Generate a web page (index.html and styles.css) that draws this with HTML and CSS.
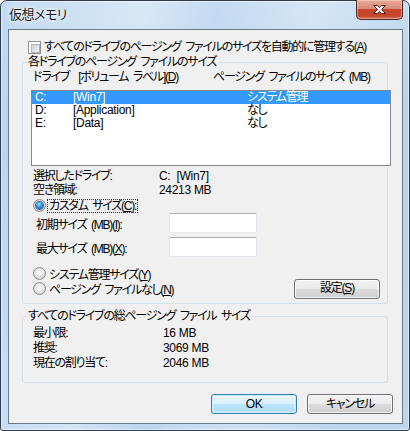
FILE: index.html
```html
<!DOCTYPE html>
<html lang="ja">
<head>
<meta charset="utf-8">
<title>仮想メモリ</title>
<link rel="stylesheet" href="styles.css">
</head>
<body>
<div class="window">
  <div class="titlebar">
    <span class="title">仮想メモリ</span>
    <span class="close">
      <svg width="17" height="11" viewBox="0 0 17 11"><path d="M2.5 1.5h4l2 2.2 2-2.2h4l-4 4 4 4h-4l-2-2.2-2 2.2h-4l4-4z" fill="#fff" stroke="#4a1c14" stroke-width="1" stroke-linejoin="round"/></svg>
    </span>
  </div>
  <div class="client">
    <div class="autorow">
      <span class="check"></span>
      <span class="label">すべてのドライブのページング ファイルのサイズを自動的に管理する(<u>A</u>)</span>
    </div>

    <fieldset class="group group-drive">
      <legend>各ドライブのページング ファイルのサイズ</legend>
      <div class="listhead">
        <span class="hcol1">ドライブ&nbsp;&nbsp;[ボリューム ラベル](<u>D</u>)</span>
        <span>ページング ファイルのサイズ (MB)</span>
      </div>
      <div class="listbox">
        <div class="lrow sel"><span class="c1 lat">C:</span><span class="c2 lat">[Win7]</span><span>システム管理</span></div>
        <div class="lrow"><span class="c1 lat">D:</span><span class="c2 lat">[Application]</span><span>なし</span></div>
        <div class="lrow"><span class="c1 lat">E:</span><span class="c2 lat">[Data]</span><span>なし</span></div>
      </div>
      <div class="info">
        <div class="irow"><span class="ik">選択したドライブ:</span><span class="lat">C:&nbsp;&nbsp;[Win7]</span></div>
        <div class="irow"><span class="ik">空き領域:</span><span class="lat">24213 MB</span></div>
      </div>
      <div class="radiorow r1">
        <span class="radio on"></span>
        <span class="focus">カスタム サイズ(<u>C</u>):</span>
      </div>
      <div class="sizerow first">
        <span class="sk">初期サイズ (MB)(<u>I</u>):</span>
        <span class="textbox"></span>
      </div>
      <div class="sizerow">
        <span class="sk">最大サイズ (MB)(<u>X</u>):</span>
        <span class="textbox"></span>
      </div>
      <div class="radiorow r2">
        <span class="radio"></span>
        <span class="rl">システム管理サイズ(<u>Y</u>)</span>
      </div>
      <div class="radiorow r3">
        <span class="radio"></span>
        <span class="rl">ページング ファイルなし(<u>N</u>)</span>
        <span class="btn setbtn">設定(<u>S</u>)</span>
      </div>
    </fieldset>

    <fieldset class="group group-total">
      <legend>すべてのドライブの総ページング ファイル サイズ</legend>
      <div class="trow first"><span class="tk">最小限:</span><span class="lat">16 MB</span></div>
      <div class="trow"><span class="tk">推奨:</span><span class="lat">3069 MB</span></div>
      <div class="trow"><span class="tk">現在の割り当て:</span><span class="lat">2046 MB</span></div>
    </fieldset>

    <div class="buttons">
      <span class="btn default lat">OK</span>
      <span class="btn">キャンセル</span>
    </div>
  </div>
</div>
</body>
</html>
```

FILE: styles.css
```css
* { box-sizing: border-box; }
html, body { margin: 0; padding: 0; background: #fff; }
body {
  font-family: "Liberation Sans", "Noto Sans CJK JP", sans-serif;
  font-size: 12px;
  font-feature-settings: "palt" 1;
  letter-spacing: -1.25px;
  word-spacing: 2.5px;
  color: #000;
}
.lat { letter-spacing: -0.3px; word-spacing: 0; }
u { text-decoration: underline; text-underline-offset: 1px; }

.window {
  width: 410px;
  height: 431px;
  border: 1px solid #2c3b4d;
  border-radius: 7px 7px 3px 3px;
  padding: 0 6px 6px 7px;
  background:
    linear-gradient(100deg, rgba(255,255,255,0) 0%, rgba(255,255,255,0.35) 30%, rgba(255,255,255,0) 45%, rgba(255,255,255,0.3) 65%, rgba(255,255,255,0) 85%),
    linear-gradient(180deg, #c4dbf2 0%, #b6d2ee 30%, #bcd6f0 100%);
  box-shadow: inset 0 0 0 1px rgba(255,255,255,0.55);
  display: flex;
  flex-direction: column;
}

.titlebar {
  height: 28px;
  display: flex;
  align-items: flex-start;
  justify-content: space-between;
}
.title {
  padding-left: 1px;
  margin-top: 5px;
  font-size: 13px;
  line-height: 17px;
  letter-spacing: -0.5px;
  color: #1a1a1a;
  text-shadow: 0 0 6px #fff, 0 0 3px #fff;
}
.close {
  width: 47px;
  height: 20px;
  margin-top: -1px;
  border: 1px solid #4b2a25;
  border-top: none;
  border-radius: 0 0 5px 5px;
  background: linear-gradient(180deg, #e9a99a 0%, #d98a78 45%, #c9452c 50%, #c4442b 80%, #d3684e 100%);
  box-shadow: inset 0 0 0 1px rgba(255,220,210,0.5);
  display: flex;
  align-items: center;
  justify-content: center;
}
.close svg { display: block; margin-top: -1px; }

.client {
  flex: 1;
  border: 1px solid #6e7a88;
  background: #f0f0f0;
  display: flex;
  flex-direction: column;
}

.autorow {
  display: flex;
  align-items: center;
  height: 13px;
  margin: 11px 0 0 19px;
  line-height: 13px;
}
.check {
  width: 13px;
  height: 13px;
  border: 1px solid #8e8f8f;
  background: #fff;
  flex: none;
  padding: 2px;
}
.check::before {
  content: "";
  display: block;
  width: 100%;
  height: 100%;
  border: 1px solid #aeb3b9;
  background: linear-gradient(135deg, #cbcfd5, #f6f6f6);
}
.autorow .label { margin-left: 3px; white-space: nowrap; }

.group {
  margin: 2px 0 0 13px;
  width: 366px;
  border: 1px solid #d5dfe5;
  border-radius: 3px;
  padding: 0 7px 0 10px;
  min-width: 0;
}
.group legend {
  margin-left: -7px;
  padding: 0 2px;
  line-height: 13px;
  height: 13px;
  white-space: nowrap;
}

.listhead {
  display: flex;
  height: 13px;
  line-height: 13px;
  margin-top: 2px;
  white-space: nowrap;
}
.hcol1 { width: 180px; flex: none; }

.listbox {
  margin: 6px 0 0 -2px;
  width: 360px;
  height: 76px;
  border: 1px solid #828790;
  background: #fff;
}
.lrow {
  display: flex;
  height: 13px;
  line-height: 13px;
  padding-left: 3px;
  white-space: nowrap;
}
.lrow.sel { background: #3399ff; color: #fff; }
.c1 { width: 38px; flex: none; }
.c2 { width: 174px; flex: none; }

.info { margin-top: 3px; }
.irow { display: flex; height: 14px; line-height: 14px; white-space: nowrap; }
.ik { width: 126px; flex: none; }

.radiorow {
  display: flex;
  align-items: center;
  height: 15px;
  white-space: nowrap;
}
.radiorow.r1 { margin-top: 1px; }
.radio {
  width: 13px;
  height: 13px;
  flex: none;
  border-radius: 50%;
  border: 1px solid #8b8b8b;
  background: radial-gradient(circle at 50% 40%, #f4f4f4 0%, #dcdcdc 55%, #c9c9c9 100%);
  display: flex;
  align-items: center;
  justify-content: center;
}
.radio::before {
  content: "";
  width: 9px;
  height: 9px;
  border-radius: 50%;
  background: radial-gradient(circle at 50% 35%, #fbfbfb, #e4e4e4 70%, #d4d4d4);
}
.radio.on::before {
  width: 7px;
  height: 7px;
  background: radial-gradient(circle at 45% 35%, #b9e4ff 0%, #3c9be6 40%, #1b5fa8 75%, #113f7e 100%);
  box-shadow: 0 0 0 1px #2e6eb3;
}
.focus {
  margin-left: 2px;
  padding: 0 1px;
  line-height: 12px;
  outline: 1px dotted #333;
  outline-offset: 0;
}
.rl { margin-left: 3px; }

.sizerow {
  display: flex;
  align-items: center;
  height: 20px;
  margin-top: 4px;
  padding-left: 3px;
  white-space: nowrap;
}
.sizerow.first { margin-top: 0; }
.sk { width: 133px; flex: none; }
.textbox {
  width: 88px;
  height: 20px;
  background: #fff;
  border: 1px solid #e2e3ea;
  border-top-color: #abadb3;
  border-bottom-color: #e3e9ef;
  border-radius: 2px;
}

.radiorow.r2 { margin-top: 9px; }
.radiorow.r3 { margin-bottom: 7px; }
.radiorow.r3 .btn { margin-left: auto; }

.btn {
  display: flex;
  align-items: center;
  justify-content: center;
  width: 86px;
  height: 20px;
  border: 1px solid #707070;
  border-radius: 3px;
  background: linear-gradient(180deg, #f2f2f2 0%, #ebebeb 48%, #dddddd 52%, #cfcfcf 100%);
  box-shadow: inset 0 0 0 1px rgba(255,255,255,0.7);
  white-space: nowrap;
  line-height: 13px;
}
.btn.default {
  border-color: #3c7fb1;
  background: linear-gradient(180deg, #eaf6fd 0%, #d9f0fc 48%, #bee6fd 52%, #a7d9f5 100%);
  box-shadow: inset 0 0 0 1px #c6eaff, inset 0 0 0 2px rgba(255,255,255,0.35);
}

.group-total { margin-top: 6px; padding-bottom: 11px; }
.trow { display: flex; height: 15px; line-height: 15px; white-space: nowrap; }
.trow.first { margin-top: 3px; }
.tk { width: 130px; flex: none; }

.buttons {
  display: flex;
  justify-content: flex-end;
  gap: 10px;
  margin: 11px 9px 0 0;
}
```
